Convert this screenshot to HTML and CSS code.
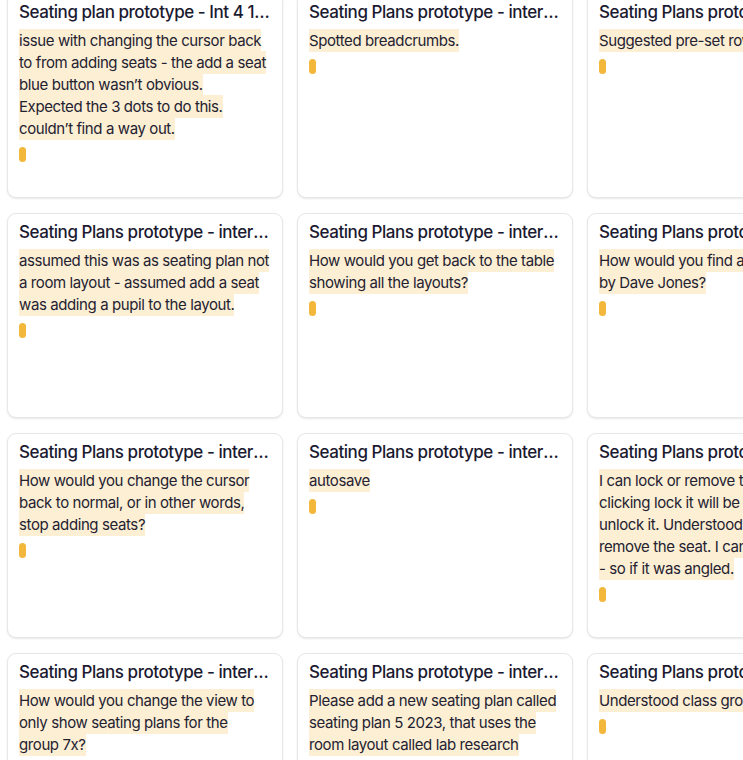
FILE: index.html
```html
<!DOCTYPE html>
<html lang="en">
<head>
<meta charset="utf-8">
<title>Stickies</title>
<link rel="stylesheet" href="styles.css">
</head>
<body>
<div class="board">
  <div class="card">
    <div class="card-title">Seating plan prototype - Int 4 1 - notes from session</div>
    <p class="card-text"><span class="hl">issue with changing the cursor back to from adding seats - the add a seat blue button wasn’t obvious.<br>Expected the 3 dots to do this.<br>couldn’t find a way out.</span></p>
    <span class="tag"></span>
  </div>
  <div class="card">
    <div class="card-title">Seating Plans prototype - interview 2</div>
    <p class="card-text"><span class="hl">Spotted breadcrumbs.</span></p>
    <span class="tag"></span>
  </div>
  <div class="card">
    <div class="card-title">Seating Plans prototype - interview 3</div>
    <p class="card-text"><span class="hl">Suggested pre-set rows of seats.</span></p>
    <span class="tag"></span>
  </div>

  <div class="card">
    <div class="card-title">Seating Plans prototype - interview 2</div>
    <p class="card-text"><span class="hl">assumed this was as seating plan not a room layout - assumed add a seat was adding a pupil to the layout.</span></p>
    <span class="tag"></span>
  </div>
  <div class="card">
    <div class="card-title">Seating Plans prototype - interview 2</div>
    <p class="card-text"><span class="hl">How would you get back to the table showing all the layouts?</span></p>
    <span class="tag"></span>
  </div>
  <div class="card">
    <div class="card-title">Seating Plans prototype - interview 3</div>
    <p class="card-text"><span class="hl">How would you find a plan created<br>by Dave Jones?</span></p>
    <span class="tag"></span>
  </div>

  <div class="card">
    <div class="card-title">Seating Plans prototype - interview 2</div>
    <p class="card-text"><span class="hl">How would you change the cursor back to normal, or in other words, stop adding seats?</span></p>
    <span class="tag"></span>
  </div>
  <div class="card">
    <div class="card-title">Seating Plans prototype - interview 2</div>
    <p class="card-text"><span class="hl">autosave</span></p>
    <span class="tag"></span>
  </div>
  <div class="card">
    <div class="card-title">Seating Plans prototype - interview 3</div>
    <p class="card-text"><span class="hl">I can lock or remove the seat. By<br>clicking lock it will be fixed, can<br>unlock it. Understood I can<br>remove the seat. I can't rotate it<br>- so if it was angled.</span></p>
    <span class="tag"></span>
  </div>

  <div class="card">
    <div class="card-title">Seating Plans prototype - interview 2</div>
    <p class="card-text"><span class="hl">How would you change the view to only show seating plans for the group 7x?</span></p>
    <span class="tag"></span>
  </div>
  <div class="card">
    <div class="card-title">Seating Plans prototype - interview 2</div>
    <p class="card-text"><span class="hl">Please add a new seating plan called seating plan 5 2023, that uses the room layout called lab research</span></p>
    <span class="tag"></span>
  </div>
  <div class="card">
    <div class="card-title">Seating Plans prototype - interview 3</div>
    <p class="card-text"><span class="hl">Understood class groups.</span></p>
    <span class="tag"></span>
  </div>
</div>
</body>
</html>
```
FILE: styles.css
```css
html, body {
  margin: 0;
  padding: 0;
  background: #ffffff;
  overflow: hidden;
  height: 760px;
}

body {
  font-family: Inter, "Noto Sans", "Liberation Sans", sans-serif;
  color: #1d1b2c;
}

.board {
  display: grid;
  grid-template-columns: repeat(3, 276px);
  grid-auto-rows: 205px;
  column-gap: 14px;
  row-gap: 15px;
  margin-top: -7px;
  margin-left: 7px;
  width: 900px;
}

.card {
  box-sizing: border-box;
  background: #fff;
  border: 1px solid #e7e7ec;
  border-radius: 9px;
  box-shadow: 0 1px 2px rgba(20, 20, 40, 0.10);
  padding: 7px 11px;
  display: flex;
  flex-direction: column;
  align-items: flex-start;
  overflow: hidden;
}

.card-title {
  width: 100%;
  font-size: 17px;
  line-height: 22px;
  font-weight: 500;
  letter-spacing: -0.45px;
  white-space: nowrap;
  overflow: hidden;
  text-overflow: ellipsis;
  color: #1b1a30;
}

.card-text {
  margin: 7px 0 0;
  font-size: 15px;
  line-height: 22px;
  letter-spacing: -0.4px;
  color: #242231;
}

.hl {
  background: #fcefd4;
  padding: 2px 0;
  -webkit-box-decoration-break: clone;
  box-decoration-break: clone;
}

.tag {
  display: block;
  width: 7px;
  height: 15px;
  border-radius: 4px;
  background: #f3b73b;
  margin-top: 7px;
}
```
